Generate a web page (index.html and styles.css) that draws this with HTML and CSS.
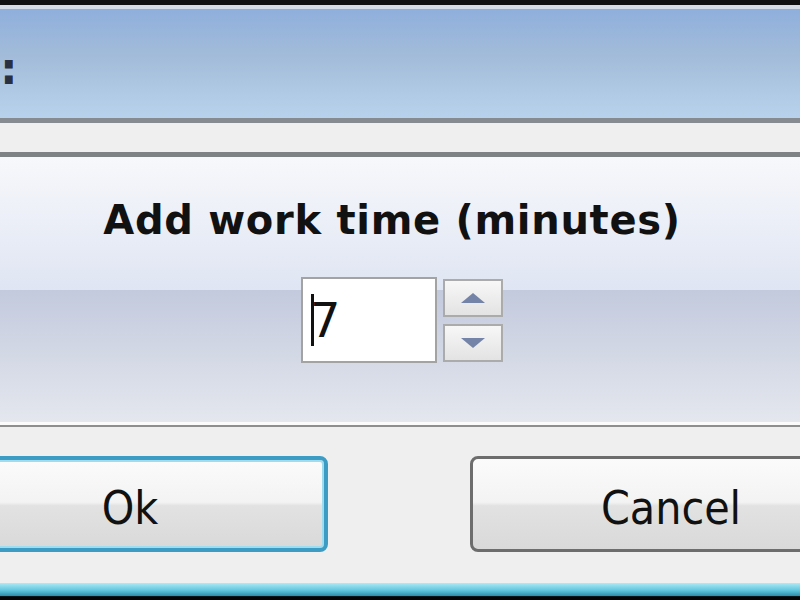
FILE: index.html
```html
<!DOCTYPE html>
<html lang="en">
<head>
  <meta charset="UTF-8">
  <title>Add work time</title>
  <link rel="stylesheet" href="styles.css">
</head>
<body>

<div class="window">
  <div class="frame-top"></div>

  <div class="titlebar">
    <span class="title-tail">:</span>
  </div>

  <div class="menubar"></div>

  <div class="content">
    <h1 class="prompt">Add work time (minutes)</h1>
    <div class="spin-row">
      <div class="spin-input"><span class="caret"></span>7</div>
      <div class="spin-buttons">
        <div class="spin-btn"><span class="arrow-up"></span></div>
        <div class="spin-btn"><span class="arrow-down"></span></div>
      </div>
    </div>
  </div>

  <div class="actions">
    <button class="btn btn-ok">Ok</button>
    <button class="btn btn-cancel">Cancel</button>
  </div>

  <div class="frame-bottom"></div>
</div>

</body>
</html>
```

FILE: styles.css
```css
body {
  margin: 0;
  padding: 0;
  width: 800px;
  height: 600px;
  overflow: hidden;
  background: #000;
  font-family: "DejaVu Sans", Tahoma, sans-serif;
}

.window {
  display: flex;
  flex-direction: column;
  width: 800px;
  height: 600px;
}

.frame-top {
  height: 5px;
  background: #111;
  border-bottom: 4px solid #d6dde6;
}

.titlebar {
  height: 109px;
  background: linear-gradient(#8fafdc, #a3bcd9 45%, #b9d2ec);
  border-bottom: 5px solid #858b90;
  display: flex;
  align-items: center;
}

.title-tail {
  margin: 10px 0 0 0;
  font-size: 44px;
  font-weight: bold;
  color: #2a3040;
  line-height: 1;
}

.menubar {
  height: 29px;
  background: #efefef;
  border-bottom: 5px solid #7f8285;
}

.content {
  height: 265px;
  background: linear-gradient(#f7f8fb 0, #dfe5f3 133px, #c3cadd 133px, #e4e7ee 100%);
  border-bottom: 3px solid #fbfbfb;
  display: flex;
  flex-direction: column;
  align-items: center;
}

.prompt {
  margin: 34px 0 0 -16px;
  font-size: 40px;
  font-weight: bold;
  letter-spacing: 0.7px;
  color: #111;
  line-height: 58px;
}

.spin-row {
  display: flex;
  gap: 6px;
  margin-top: 28px;
  margin-left: 4px;
}

.spin-input {
  width: 136px;
  height: 86px;
  background: #fff;
  border: 2px solid #a3a3a3;
  display: flex;
  align-items: center;
  padding-left: 8px;
  box-sizing: border-box;
  font-size: 48px;
  color: #111;
}

.caret {
  width: 3px;
  height: 52px;
  background: #111;
  margin-right: -4px;
}

.spin-buttons {
  display: flex;
  flex-direction: column;
  gap: 7px;
  padding-top: 2px;
}

.spin-btn {
  width: 60px;
  height: 38px;
  box-sizing: border-box;
  border: 2px solid #ababab;
  background: linear-gradient(#f7f7f7, #e3e3e3);
  display: flex;
  align-items: center;
  justify-content: center;
}

.arrow-up {
  border-left: 12px solid transparent;
  border-right: 12px solid transparent;
  border-bottom: 10px solid #7483a8;
}

.arrow-down {
  border-left: 12px solid transparent;
  border-right: 12px solid transparent;
  border-top: 10px solid #7483a8;
}

.actions {
  height: 158px;
  background: #efefef;
  border-top: 2px solid #8e8e8e;
  display: flex;
  align-items: flex-start;
  padding-top: 29px;
  box-sizing: border-box;
}

.btn {
  height: 96px;
  font-family: "DejaVu Sans Condensed", "DejaVu Sans", sans-serif;
  font-size: 46px;
  color: #111;
  background: linear-gradient(#fbfbfb 0, #f3f3f3 48%, #e2e2e2 52%, #d9d9d9 100%);
  box-sizing: border-box;
  padding: 8px 0 0;
  flex-shrink: 0;
}

.btn-ok {
  width: 396px;
  margin-left: -68px;
  border: 4px solid #3c9cc4;
  border-radius: 8px;
  box-shadow: inset 0 0 0 2px #9fdcf0;
}

.btn-cancel {
  width: 402px;
  margin-left: 142px;
  border: 3px solid #6d6d6d;
  border-radius: 8px;
}

.frame-bottom {
  flex: 1;
  background: linear-gradient(#aeeaf6 0, #5cc4dc 45%, #2f8fac 75%, #050505 80%);
}
```
